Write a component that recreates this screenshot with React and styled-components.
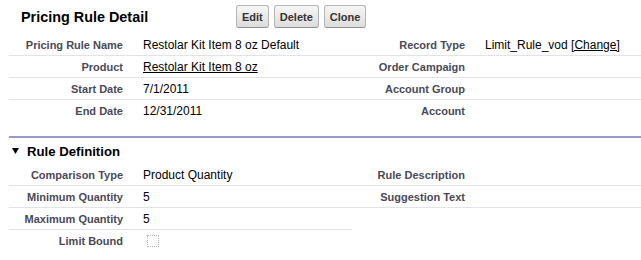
import React from "react";
import styled, { createGlobalStyle } from "styled-components";

const GlobalStyle = createGlobalStyle`
  body {
    margin: 0;
    background: #fff;
    font-family: "Liberation Sans", Arial, sans-serif;
    font-size: 12px;
    color: #000;
  }
`;

const Page = styled.div`
  width: 641px;
  height: 260px;
  overflow: hidden;
  padding-left: 9px;
  box-sizing: border-box;
`;

const TitleBar = styled.div`
  display: flex;
  align-items: center;
  height: 34px;
  padding-bottom: 1px;
  box-sizing: border-box;
`;

const Title = styled.h2`
  width: 215px;
  margin: 0;
  padding-left: 12px;
  font-size: 14.4px;
  font-weight: bold;
  color: #000;
`;

const Buttons = styled.div`
  display: flex;
  gap: 5px;
`;

const Button = styled.button`
  height: 23px;
  padding: 0 5px;
  font-family: "Liberation Sans", Arial, sans-serif;
  font-size: 11px;
  font-weight: bold;
  color: #333;
  background: linear-gradient(#f6f6f6, #dcdcdc);
  border: 1px solid #b5b5b5;
  border-bottom-color: #8f8f8f;
  border-radius: 3px;
`;

const Grid = styled.div`
  display: grid;
  grid-template-columns: 124px 219px 123px 1fr;
`;

const Label = styled.div`
  height: 22px;
  box-sizing: border-box;
  display: flex;
  align-items: center;
  justify-content: flex-end;
  padding: 0 10px 0 2px;
  font-size: 11px;
  font-weight: bold;
  color: #4a4a56;
  white-space: nowrap;
  border-bottom: 1px solid ${(p) => (p.$line ? "#e3e3e7" : "transparent")};
`;

const Value = styled.div`
  height: 22px;
  box-sizing: border-box;
  display: flex;
  align-items: center;
  padding: 0 2px 0 10px;
  font-size: 12px;
  color: #000;
  white-space: nowrap;
  border-bottom: 1px solid ${(p) => (p.$line ? "#e3e3e7" : "transparent")};
`;

const Link = styled.a`
  color: #000;
  text-decoration: underline;
  cursor: pointer;
`;

const Section = styled.div`
  margin-top: 14px;
  border-top: 2px solid #9a99cd;
`;

const SectionHeader = styled.h3`
  display: flex;
  align-items: center;
  gap: 8px;
  height: 26px;
  margin: 0;
  padding-left: 3px;
  font-size: 13.2px;
  font-weight: bold;
  color: #000;
`;

const Check = styled.span`
  width: 12px;
  height: 12px;
  margin-left: 4px;
  box-sizing: border-box;
  border: 1px dotted #b8b8b8;
`;

const Triangle = () => (
  <svg width="7" height="6" viewBox="0 0 7 6">
    <polygon points="0,0 7,0 3.5,6" fill="#000" />
  </svg>
);

const Field = ({ label, line, children }) => (
  <>
    <Label $line={line}>{label}</Label>
    <Value $line={line}>{children}</Value>
  </>
);

export default function App() {
  return (
    <Page>
      <GlobalStyle />
      <TitleBar>
        <Title>Pricing Rule Detail</Title>
        <Buttons>
          <Button>Edit</Button>
          <Button>Delete</Button>
          <Button>Clone</Button>
        </Buttons>
      </TitleBar>
      <Grid>
        <Field label="Pricing Rule Name" line>Restolar Kit Item 8 oz Default</Field>
        <Field label="Record Type" line>
          Limit_Rule_vod&nbsp;<Link>[Change]</Link>
        </Field>
        <Field label="Product" line>
          <Link>Restolar Kit Item 8 oz</Link>
        </Field>
        <Field label="Order Campaign" line />
        <Field label="Start Date" line>7/1/2011</Field>
        <Field label="Account Group" line />
        <Field label="End Date">12/31/2011</Field>
        <Field label="Account" />
      </Grid>
      <Section>
        <SectionHeader>
          <Triangle />
          Rule Definition
        </SectionHeader>
        <Grid>
          <Field label="Comparison Type" line>Product Quantity</Field>
          <Field label="Rule Description" line />
          <Field label="Minimum Quantity" line>5</Field>
          <Field label="Suggestion Text" line />
          <Field label="Maximum Quantity" line>5</Field>
          <div />
          <div />
          <Field label="Limit Bound">
            <Check />
          </Field>
        </Grid>
      </Section>
    </Page>
  );
}
